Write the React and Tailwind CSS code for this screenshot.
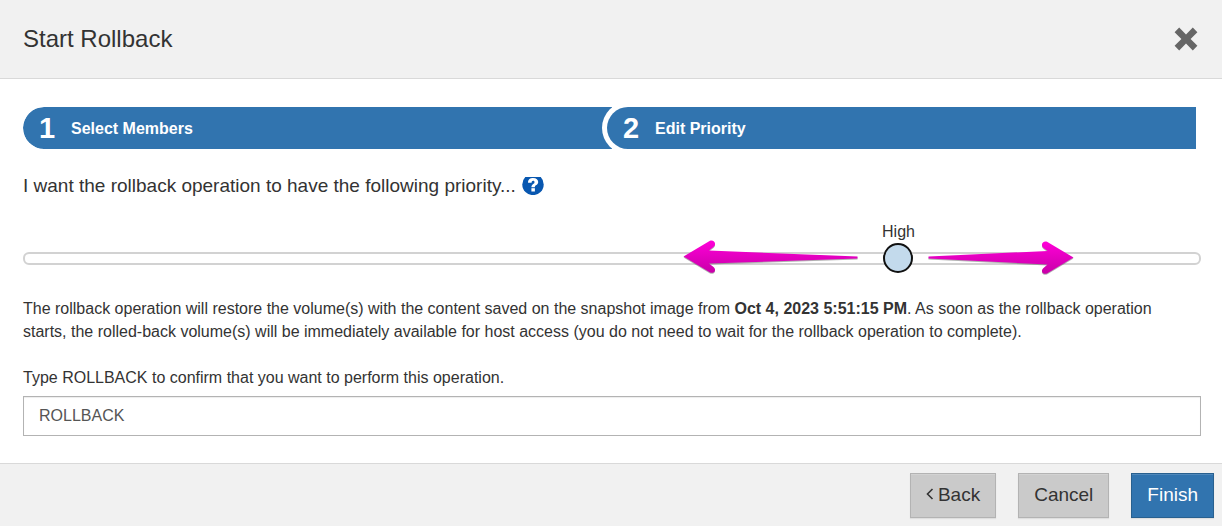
import { useState } from "react";

function Step({ number, label, className }) {
  return (
    <li className={`flex h-full flex-1 items-center rounded-l-full bg-[#3174af] pl-4 text-white ${className}`}>
      <span className="w-8 text-[29px] leading-10 font-bold">{number}</span>
      <span className="pt-px text-base font-bold">{label}</span>
    </li>
  );
}

function CloseIcon() {
  return (
    <svg width="24" height="24" viewBox="0 0 24 24" aria-hidden="true">
      <path
        d="M5.2 0.6 L12 7.4 L18.8 0.6 L23.4 5.2 L16.6 12 L23.4 18.8 L18.8 23.4 L12 16.6 L5.2 23.4 L0.6 18.8 L7.4 12 L0.6 5.2 Z"
        fill="#666"
      />
    </svg>
  );
}

function HelpIcon() {
  return (
    <svg width="22" height="18" viewBox="0 0 22 18" aria-hidden="true">
      <circle cx="11" cy="7.4" r="10.7" fill="#0857b0" />
      <path
        d="M6 5.8 C6 2.4 8.200 1 11.100 1 C14.400 1 16.200 2.700 16.200 5.100 C16.200 8.100 12.900 8.100 12.800 10.200 L9.400 10.200 C9.400 7 12.500 7.200 12.500 5.200 C12.500 4.200 11.900 3.800 11.100 3.800 C10.200 3.800 9.600 4.500 9.600 5.800 Z"
        fill="#fff"
      />
      <rect x="9.400" y="11.200" width="3.500" height="3.300" fill="#fff" />
    </svg>
  );
}

function Arrow({ id, width, d, className }) {
  return (
    <svg width={width} height="36" viewBox={`0 0 ${width} 36`} className={className} aria-hidden="true">
      <defs>
        <linearGradient id={id} x1="0" y1="0" x2="0" y2="1">
          <stop offset="0" stopColor="#ff00d8" />
          <stop offset="1" stopColor="#c800a8" />
        </linearGradient>
      </defs>
      <path d={d} transform="translate(0 1)" fill="#555" opacity="0.45" />
      <path d={d} fill={`url(#${id})`} />
    </svg>
  );
}

export default function App() {
  const [priority, setPriority] = useState(3);
  const [confirmation, setConfirmation] = useState("ROLLBACK");
  const levels = ["Lowest", "Low", "Medium", "High", "Highest"];

  return (
    <div
      role="dialog"
      aria-labelledby="title"
      className="bg-white font-['Liberation_Sans',Arial,sans-serif] text-base leading-[23px] text-[#333]"
    >
      <header className="flex items-center justify-between border-b border-[#d9d9d9] bg-[#f1f1f1] py-5 pr-6 pl-[23px]">
        <h1 id="title" className="text-2xl leading-[38px]">Start Rollback</h1>
        <button type="button" aria-label="Close">
          <CloseIcon />
        </button>
      </header>

      <main className="pt-7 pr-[21px] pb-[27px] pl-[23px]">
        <ol className="mr-[5px] flex h-[42px] overflow-hidden rounded-l-full">
          <Step number="1" label="Select Members" className="-mr-[5px]" />
          <Step number="2" label="Edit Priority" className="shadow-[0_0_0_5px_white]" />
        </ol>

        <div className="mt-[25px] flex items-center gap-1.5">
          <label htmlFor="priority" className="text-[19px] leading-6">
            I want the rollback operation to have the following priority...
          </label>
          <button type="button" aria-label="Help">
            <HelpIcon />
          </button>
        </div>

        <div className="relative mt-[45px]">
          <output htmlFor="priority" className="absolute -top-[23px] left-[calc(75%-8px)] -translate-x-1/2">
            {levels[priority]}
          </output>
          <input
            id="priority"
            type="range"
            min="0"
            max="4"
            value={priority}
            onChange={(e) => setPriority(Number(e.target.value))}
            className="block h-[30px] w-full appearance-none bg-transparent [&::-webkit-slider-runnable-track]:h-[13px] [&::-webkit-slider-runnable-track]:rounded-md [&::-webkit-slider-runnable-track]:border-2 [&::-webkit-slider-runnable-track]:border-[#d2d2d2] [&::-webkit-slider-thumb]:-mt-[11px] [&::-webkit-slider-thumb]:size-[30px] [&::-webkit-slider-thumb]:appearance-none [&::-webkit-slider-thumb]:rounded-full [&::-webkit-slider-thumb]:border-2 [&::-webkit-slider-thumb]:border-solid [&::-webkit-slider-thumb]:border-[#111] [&::-webkit-slider-thumb]:bg-[#c3daec]"
          />
          <Arrow
            id="arrow-left"
            width={175}
            className="pointer-events-none absolute -top-[3px] right-[343px]"
            d="M0.5 16.5 L27 0.8 C31 -0.5 34 4 30.500 7 L26 10.500 L174.500 16.500 L174.500 18.500 L26 23.500 L30.500 27 C34 30 31 34 27 32.500 Z"
          />
          <Arrow
            id="arrow-right"
            width={146}
            className="pointer-events-none absolute -top-[3px] right-[127px]"
            d="M145.500 17.500 L119 1.800 C115 0.500 112 5 115.500 8 L119.500 11 L0.500 16.500 L0.500 18.500 L119.500 24.500 L115.500 28 C112 31 115 35 119 33.500 Z"
          />
        </div>

        <p className="mt-6 pr-8">
          The rollback operation will restore the volume(s) with the content saved on the snapshot image from{" "}
          <strong>Oct 4, 2023 5:51:15 PM</strong>. As soon as the rollback operation starts, the rolled-back volume(s)
          will be immediately available for host access (you do not need to wait for the rollback operation to
          complete).
        </p>

        <label htmlFor="confirmation" className="mt-[23px] block">
          Type ROLLBACK to confirm that you want to perform this operation.
        </label>
        <input
          id="confirmation"
          type="text"
          value={confirmation}
          onChange={(e) => setConfirmation(e.target.value)}
          className="mt-[7px] block h-10 w-full border border-[#b3b3b3] px-[15px] text-[#555] shadow-[inset_0_1px_1px_rgba(0,0,0,0.075)]"
        />
      </main>

      <footer className="flex justify-end gap-[22px] border-t border-[#d9d9d9] bg-[#f1f1f1] px-2 pt-[9px] pb-2 text-[19px]">
        <button
          type="button"
          className="flex h-[45px] items-center gap-1 border border-[#b3b3b3] bg-[#cacaca] px-[15px] pb-0.5 shadow-[inset_0_1px_0_rgba(255,255,255,0.15),0_1px_1px_rgba(0,0,0,0.075)]"
        >
          <svg width="8" height="14" viewBox="0 0 8 14" aria-hidden="true">
            <path d="M6.500 1 L1.500 6 L6.500 11" fill="none" stroke="#333" strokeWidth="1.600" />
          </svg>
          Back
        </button>
        <button
          type="button"
          className="h-[45px] border border-[#b3b3b3] bg-[#cacaca] px-[15px] pb-0.5 shadow-[inset_0_1px_0_rgba(255,255,255,0.15),0_1px_1px_rgba(0,0,0,0.075)]"
        >
          Cancel
        </button>
        <button
          type="button"
          className="h-[45px] border border-[#28608f] bg-[#3174af] px-[15px] pb-0.5 text-white shadow-[inset_0_1px_0_rgba(255,255,255,0.15),0_1px_1px_rgba(0,0,0,0.075)]"
        >
          Finish
        </button>
      </footer>
    </div>
  );
}
